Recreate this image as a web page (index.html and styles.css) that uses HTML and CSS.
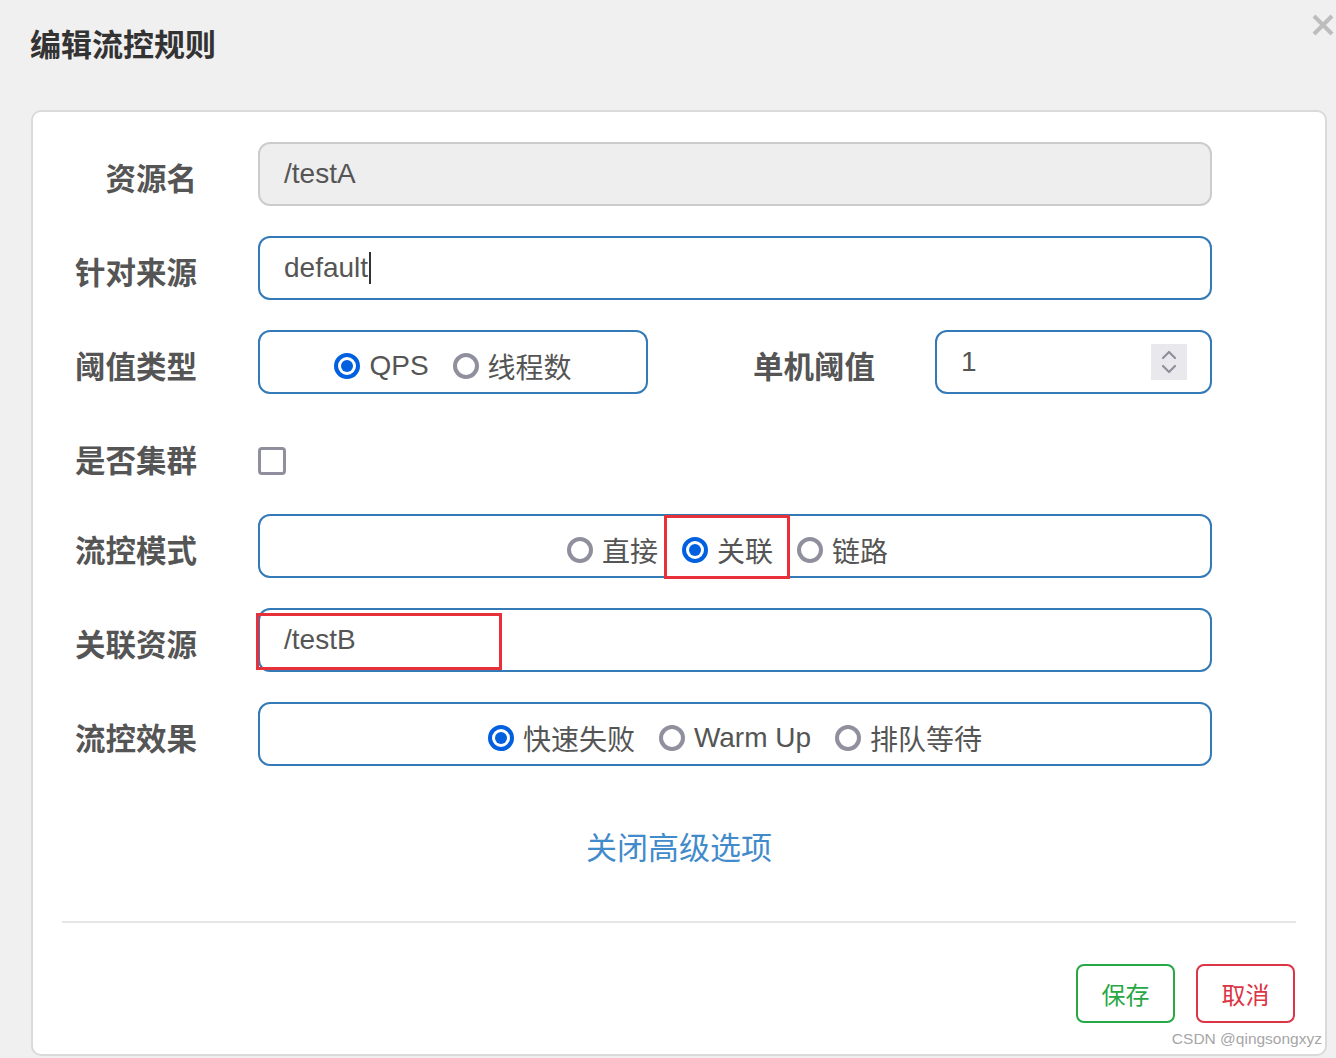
FILE: index.html
```html
<!DOCTYPE html>
<html lang="zh-CN">
<head>
<meta charset="utf-8">
<title>编辑流控规则</title>
<link rel="stylesheet" href="styles.css">
</head>
<body>
<div class="modal">
  <header class="modal-header">
    <h1 class="title">编辑流控规则</h1>
    <span class="close" aria-label="关闭">
      <svg width="22" height="22" viewBox="0 0 22 22"><path d="M2 2 L20 20 M20 2 L2 20" stroke="#bdbdbd" stroke-width="4" stroke-linecap="butt"/></svg>
    </span>
  </header>

  <div class="card">
    <div class="form">
      <div class="row">
        <div class="label">资源名</div>
        <div class="field field-disabled">/testA</div>
      </div>
      <div class="row">
        <div class="label">针对来源</div>
        <div class="field">default<span class="caret"></span></div>
      </div>
      <div class="row">
        <div class="label">阈值类型</div>
        <div class="group group-narrow">
          <span class="opt"><span class="radio radio-on"></span>QPS</span>
          <span class="opt"><span class="radio"></span>线程数</span>
        </div>
        <div class="label label-mid">单机阈值</div>
        <div class="field field-num">
          <span>1</span>
          <span class="spin">
            <svg width="36" height="36" viewBox="0 0 36 36"><path d="M12 14 L18 8 L24 14 M12 22 L18 28 L24 22" fill="none" stroke="#8f8f9d" stroke-width="2.2" stroke-linecap="round" stroke-linejoin="round"/></svg>
          </span>
        </div>
      </div>
      <div class="row row-check">
        <div class="label">是否集群</div>
        <span class="checkbox"></span>
      </div>
      <div class="row">
        <div class="label">流控模式</div>
        <div class="group group-shift">
          <span class="opt"><span class="radio"></span>直接</span>
          <span class="opt opt-mark"><span class="radio radio-on"></span>关联</span>
          <span class="opt"><span class="radio"></span>链路</span>
        </div>
      </div>
      <div class="row">
        <div class="label">关联资源</div>
        <div class="field field-mark">/testB</div>
      </div>
      <div class="row">
        <div class="label">流控效果</div>
        <div class="group">
          <span class="opt"><span class="radio radio-on"></span>快速失败</span>
          <span class="opt"><span class="radio"></span>Warm Up</span>
          <span class="opt"><span class="radio"></span>排队等待</span>
        </div>
      </div>
    </div>

    <div class="advanced"><a class="link">关闭高级选项</a></div>
    <div class="sep"></div>
    <div class="actions">
      <button class="btn btn-save">保存</button>
      <button class="btn btn-cancel">取消</button>
    </div>
  </div>

  <div class="watermark">CSDN @qingsongxyz</div>
</div>
</body>
</html>
```

FILE: styles.css
```css
html, body {
  margin: 0;
  padding: 0;
}

body {
  background: #f0f0f0;
  font-family: "Liberation Sans", "Noto Sans CJK SC", sans-serif;
  color: #555;
  width: 1336px;
  height: 1058px;
  overflow: hidden;
}

.modal {
  position: relative;
  height: 1058px;
}

.modal-header {
  display: flex;
  justify-content: space-between;
  align-items: flex-start;
  height: 110px;
  box-sizing: border-box;
  padding: 14px 2px 0 30px;
}

.title {
  margin: 12px 0 0 0;
  font-size: 31px;
  line-height: 40px;
  font-weight: bold;
  color: #333;
}

.close {
  display: block;
  width: 22px;
  height: 22px;
}

.close svg {
  display: block;
}

.card {
  margin-left: 31px;
  width: 1296px;
  height: 946px;
  box-sizing: border-box;
  background: #fff;
  border: 2px solid #dadada;
  border-radius: 10px;
  padding-top: 30px;
}

.form {
  display: flex;
  flex-direction: column;
  gap: 30px;
  padding-right: 113px;
}

.row {
  display: flex;
  align-items: center;
  height: 64px;
}

.label {
  flex: none;
  width: 164px;
  margin-right: 61px;
  text-align: right;
  font-size: 30.5px;
  line-height: 40px;
  font-weight: bold;
  color: #555;
  padding-top: 10px;
  box-sizing: border-box;
  white-space: nowrap;
}

.label-mid {
  width: 227px;
  margin-right: 60px;
}

.field {
  flex: 1;
  height: 64px;
  box-sizing: border-box;
  border: 2px solid #337ab7;
  border-radius: 12px;
  padding: 0 24px;
  display: flex;
  align-items: center;
  font-size: 28px;
  color: #555;
  background: #fff;
}

.field-disabled {
  background: #eee;
  border-color: #ccc;
}

.caret {
  display: inline-block;
  width: 2px;
  height: 32px;
  background: #333;
  margin-left: 1px;
}

.field-num {
  justify-content: space-between;
  padding-right: 23px;
}

.spin {
  display: block;
  width: 36px;
  height: 36px;
  background: #e9e9ed;
}

.spin svg {
  display: block;
}

.field-mark {
  position: relative;
}

.field-mark::after {
  content: "";
  position: absolute;
  left: -4px;
  top: 3px;
  width: 246px;
  height: 57px;
  box-sizing: border-box;
  border: 3px solid #e8303a;
}

.group {
  flex: 1;
  height: 64px;
  box-sizing: border-box;
  border: 2px solid #337ab7;
  border-radius: 12px;
  display: flex;
  justify-content: center;
  align-items: center;
  padding-top: 8px;
  font-size: 28px;
  color: #555;
}

.group-narrow {
  flex: none;
  width: 390px;
}

.group-shift {
  padding-right: 15px;
}

.opt {
  display: flex;
  align-items: center;
  gap: 9px;
  margin-right: 24px;
  white-space: nowrap;
}

.opt:last-child {
  margin-right: 0;
}

.opt-mark {
  position: relative;
  align-self: stretch;
}

.opt-mark::after {
  content: "";
  position: absolute;
  left: -18px;
  right: -17px;
  top: -9px;
  bottom: -3px;
  border: 3px solid #e8303a;
}

.radio {
  flex: none;
  width: 26px;
  height: 26px;
  box-sizing: border-box;
  border: 4px solid #8f8f9d;
  border-radius: 50%;
  background: #fff;
  display: flex;
  align-items: center;
  justify-content: center;
}

.radio-on {
  border-color: #0060df;
}

.radio-on::after {
  content: "";
  width: 12px;
  height: 12px;
  border-radius: 50%;
  background: #0060df;
}

.row-check {
  height: 60px;
}

.row-check .label {
  padding-top: 14px;
}

.checkbox {
  display: block;
  width: 28px;
  height: 28px;
  box-sizing: border-box;
  border: 3px solid #8f8f9d;
  border-radius: 4px;
  margin-top: 14px;
}

.advanced {
  margin-top: 63px;
  text-align: center;
  line-height: 40px;
  height: 40px;
}

.link {
  font-size: 31px;
  color: #428bca;
  cursor: pointer;
}

.sep {
  margin: 52px 29px 0 29px;
  height: 2px;
  background: #e5e5e5;
}

.actions {
  display: flex;
  justify-content: flex-end;
  gap: 21px;
  margin-top: 41px;
  padding-right: 30px;
}

.btn {
  width: 99px;
  height: 59px;
  box-sizing: border-box;
  background: #fff;
  border: 2px solid;
  border-radius: 8px;
  font-family: "Liberation Sans", "Noto Sans CJK SC", sans-serif;
  font-size: 24px;
  padding: 0;
  cursor: pointer;
}

.btn-save {
  border-color: #28a745;
  color: #28a745;
}

.btn-cancel {
  border-color: #dc3545;
  color: #dc3545;
}

.watermark {
  position: absolute;
  right: 14px;
  top: 1029px;
  font-size: 15.5px;
  line-height: 20px;
  color: #a6a6a6;
  white-space: nowrap;
}
```
